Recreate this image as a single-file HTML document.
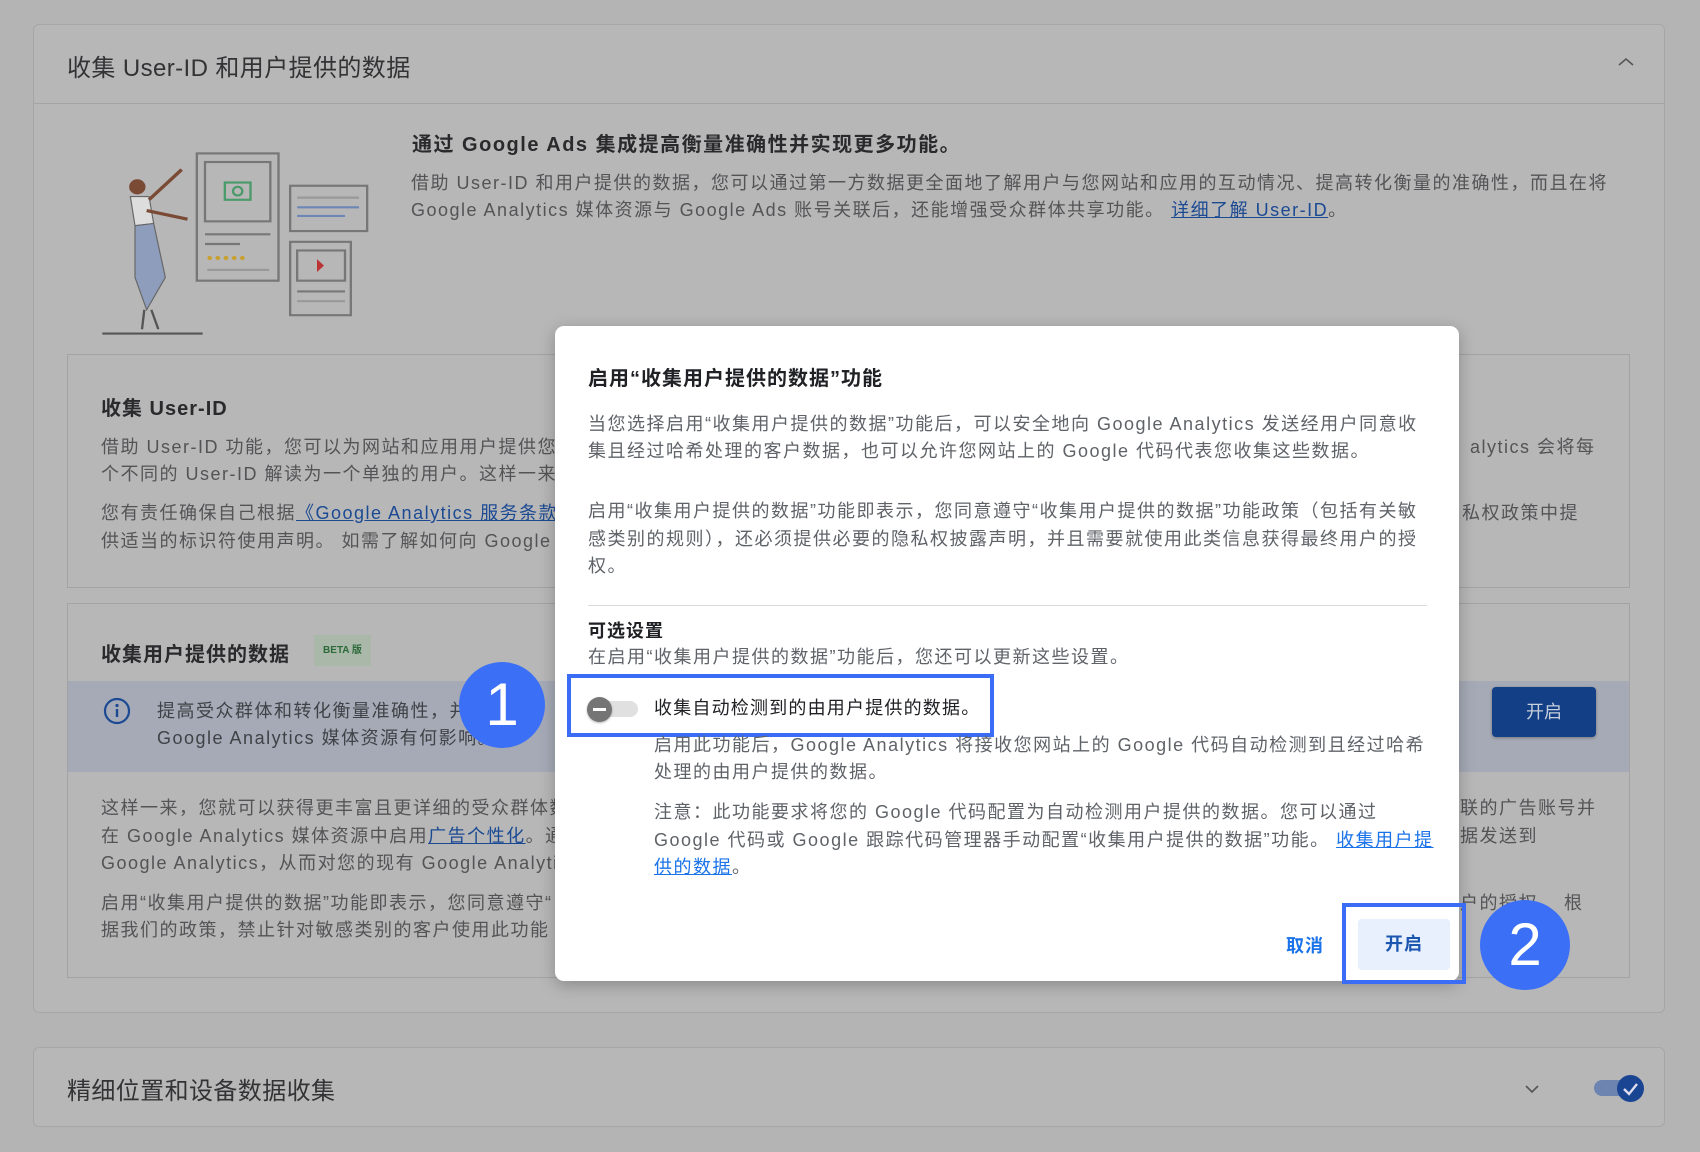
<!DOCTYPE html>
<html><head><meta charset="utf-8">
<style>
*{margin:0;padding:0;box-sizing:border-box}
body{width:1700px;height:1152px;background:#b4b4b5;font-family:"Liberation Sans","Noto Sans CJK SC",sans-serif;position:relative;overflow:hidden;color:#4a4a4c}
.a{position:absolute;white-space:nowrap}
.card{position:absolute;background:#b7b7b8;border:1px solid #a6a6a8;border-radius:6px}
.box{position:absolute;border:1px solid #a3a3a5}
.t{font-size:18px;color:#545456;line-height:27px;letter-spacing:1.5px}
.lk{color:#1b4a93;text-decoration:underline}
.dlg{position:absolute;left:555px;top:326px;width:904px;height:655px;background:#fff;border-radius:9px;box-shadow:0 4px 16px rgba(0,0,0,.25)}
.d{font-size:18px;color:#5f6368;line-height:27px;letter-spacing:1.5px}
.dl{color:#1a73e8;text-decoration:underline}
.circ{position:absolute;border-radius:50%;background:#3b6ff5;color:#fff;font-size:60px;text-align:center;font-family:"Liberation Sans",sans-serif}
</style></head><body>

<div class="card" style="left:33px;top:24px;width:1632px;height:989px"></div>
<div class="a" style="left:67px;top:48px;font-size:24px;color:#333335;letter-spacing:0.4px">收集 User-ID 和用户提供的数据</div>
<div class="a" style="left:33px;top:103px;width:1632px;height:1px;background:#a4a4a6"></div>
<svg class="a" style="left:1616px;top:55px" width="20" height="14"><path d="M3 10 L10 4 L17 10" stroke="#555" stroke-width="1.6" fill="none"/></svg>

<svg class="a" style="left:100px;top:148px" width="280" height="192" viewBox="0 0 240 178" preserveAspectRatio="none">
<rect x="83" y="5" width="70" height="118" fill="none" stroke="#777" stroke-width="2"/>
<rect x="90" y="13" width="56" height="55" fill="none" stroke="#777" stroke-width="2"/>
<rect x="107" y="32" width="22" height="16" fill="none" stroke="#4a9a6a" stroke-width="2"/>
<circle cx="118" cy="40" r="4" fill="none" stroke="#4a9a6a" stroke-width="2"/>
<line x1="90" y1="80" x2="146" y2="80" stroke="#777" stroke-width="2"/>
<line x1="90" y1="89" x2="120" y2="89" stroke="#777" stroke-width="2"/>
<g fill="#c9a030"><circle cx="94" cy="102" r="2"/><circle cx="101" cy="102" r="2"/><circle cx="108" cy="102" r="2"/><circle cx="115" cy="102" r="2"/><circle cx="122" cy="102" r="2"/></g>
<line x1="92" y1="113" x2="145" y2="113" stroke="#999" stroke-width="2"/>
<rect x="163" y="35" width="66" height="42" fill="none" stroke="#777" stroke-width="2"/>
<line x1="169" y1="46" x2="222" y2="46" stroke="#999" stroke-width="2"/>
<line x1="169" y1="55" x2="222" y2="55" stroke="#6c86b5" stroke-width="2"/>
<line x1="169" y1="63" x2="210" y2="63" stroke="#6c86b5" stroke-width="2"/>
<rect x="163" y="87" width="52" height="68" fill="none" stroke="#777" stroke-width="2"/>
<rect x="169" y="95" width="41" height="28" fill="none" stroke="#777" stroke-width="2"/>
<path d="M186 103 L192 109 L186 115Z" fill="#b33"/>
<line x1="169" y1="133" x2="210" y2="133" stroke="#777" stroke-width="2"/>
<line x1="169" y1="142" x2="210" y2="142" stroke="#999" stroke-width="2"/>
<circle cx="32" cy="36" r="7" fill="#7a4a35"/>
<path d="M26 45 L42 45 L46 70 L30 72Z" fill="#ddd" stroke="#666"/>
<path d="M42 48 L70 20 M40 58 L75 66" stroke="#7a4a35" stroke-width="3"/>
<path d="M30 72 L46 70 L56 120 L40 150 L30 120Z" fill="#8d9dbb" stroke="#666"/>
<path d="M38 150 L36 168 M44 150 L50 168" stroke="#555" stroke-width="2"/>
<line x1="2" y1="172" x2="88" y2="172" stroke="#555" stroke-width="2"/>
</svg>

<div class="a" style="left:412px;top:128px;font-size:20px;font-weight:bold;color:#2a2a2c;letter-spacing:1.5px">通过 Google Ads 集成提高衡量准确性并实现更多功能。</div>
<div class="a t" style="left:411px;top:170px">借助 User-ID 和用户提供的数据，您可以通过第一方数据更全面地了解用户与您网站和应用的互动情况、提高转化衡量的准确性，而且在将</div>
<div class="a t" style="left:411px;top:197px">Google Analytics 媒体资源与 Google Ads 账号关联后，还能增强受众群体共享功能。 <span class="lk">详细了解 User-ID</span>。</div>

<div class="box" style="left:67px;top:354px;width:1563px;height:234px"></div>
<div class="a" style="left:101px;top:392px;font-size:20px;font-weight:bold;color:#2a2a2c;letter-spacing:1px">收集 User-ID</div>
<div class="a t" style="left:101px;top:434px">借助 User-ID 功能，您可以为网站和应用用户提供您自</div>
<div class="a t" style="left:101px;top:461px">个不同的 User-ID 解读为一个单独的用户。这样一来，</div>
<div class="a t" style="left:101px;top:500px">您有责任确保自己根据<span class="lk">《Google Analytics 服务条款》</span></div>
<div class="a t" style="left:101px;top:528px">供适当的标识符使用声明。 如需了解如何向 Google A</div>
<div class="a t" style="left:1470px;top:434px">alytics 会将每</div>
<div class="a t" style="left:1462px;top:500px">私权政策中提</div>

<div class="box" style="left:67px;top:603px;width:1563px;height:375px"></div>
<div class="a" style="left:101px;top:638px;font-size:20px;font-weight:bold;color:#2a2a2c;letter-spacing:1px">收集用户提供的数据</div>
<div class="a" style="left:314px;top:635px;width:57px;height:31px;background:#a9b8a9;color:#2d6a3a;font-size:10px;font-weight:bold;line-height:31px;text-align:center">BETA 版</div>
<div class="a" style="left:68px;top:681px;width:1561px;height:91px;background:#a5aab6"></div>
<svg class="a" style="left:103px;top:697px" width="28" height="28"><circle cx="14" cy="14" r="12" fill="none" stroke="#1b4a93" stroke-width="2.2"/><circle cx="14" cy="8.5" r="1.6" fill="#1b4a93"/><line x1="14" y1="12" x2="14" y2="20" stroke="#1b4a93" stroke-width="2.4"/></svg>
<div class="a t" style="left:157px;top:698px;color:#3f4246">提高受众群体和转化衡量准确性，并</div>
<div class="a t" style="left:157px;top:725px;color:#3f4246">Google Analytics 媒体资源有何影响。</div>
<div class="a" style="left:1492px;top:687px;width:104px;height:50px;background:#133f86;border-radius:4px;color:#c8cfdc;font-size:18px;line-height:50px;text-align:center;box-shadow:0 1px 3px rgba(0,0,0,.3)">开启</div>
<div class="a t" style="left:101px;top:795px">这样一来，您就可以获得更丰富且更详细的受众群体数</div>
<div class="a t" style="left:101px;top:823px">在 Google Analytics 媒体资源中启用<span class="lk">广告个性化</span>。通</div>
<div class="a t" style="left:101px;top:850px">Google Analytics，从而对您的现有 Google Analytics</div>
<div class="a t" style="left:101px;top:890px">启用“收集用户提供的数据”功能即表示，您同意遵守“</div>
<div class="a t" style="left:101px;top:917px">据我们的政策，禁止针对敏感类别的客户使用此功能</div>
<div class="a t" style="left:1460px;top:795px">联的广告账号并</div>
<div class="a t" style="left:1460px;top:823px">据发送到</div>
<div class="a t" style="left:1460px;top:890px">户的授权。 根</div>

<div class="card" style="left:33px;top:1047px;width:1632px;height:80px"></div>
<div class="a" style="left:67px;top:1071px;font-size:24px;color:#333335;letter-spacing:0.4px">精细位置和设备数据收集</div>
<svg class="a" style="left:1523px;top:1083px" width="18" height="12"><path d="M3 3 L9 9 L15 3" stroke="#555" stroke-width="1.6" fill="none"/></svg>
<div class="a" style="left:1594px;top:1080px;width:40px;height:16px;border-radius:8px;background:#6d84b0"></div>
<div class="a" style="left:1617px;top:1075px;width:27px;height:27px;border-radius:50%;background:#1a4592"></div>
<svg class="a" style="left:1617px;top:1075px" width="27" height="27"><path d="M7 14 L12 19 L20 9" stroke="#dde" stroke-width="2.4" fill="none"/></svg>

<div class="dlg"></div>
<div class="a" style="left:588px;top:362px;font-size:20px;font-weight:bold;color:#202124;letter-spacing:1px">启用“收集用户提供的数据”功能</div>
<div class="a d" style="left:588px;top:411px">当您选择启用“收集用户提供的数据”功能后，可以安全地向 Google Analytics 发送经用户同意收</div>
<div class="a d" style="left:588px;top:438px">集且经过哈希处理的客户数据，也可以允许您网站上的 Google 代码代表您收集这些数据。</div>
<div class="a d" style="left:588px;top:498px">启用“收集用户提供的数据”功能即表示，您同意遵守“收集用户提供的数据”功能政策（包括有关敏</div>
<div class="a d" style="left:588px;top:526px">感类别的规则），还必须提供必要的隐私权披露声明，并且需要就使用此类信息获得最终用户的授</div>
<div class="a d" style="left:588px;top:553px">权。</div>
<div class="a" style="left:588px;top:605px;width:839px;height:1px;background:#dadce0"></div>
<div class="a" style="left:588px;top:617px;font-size:18px;font-weight:bold;color:#202124;letter-spacing:1px">可选设置</div>
<div class="a d" style="left:588px;top:644px">在启用“收集用户提供的数据”功能后，您还可以更新这些设置。</div>
<div class="a" style="left:600px;top:701px;width:38px;height:16px;border-radius:8px;background:#e0e0e0"></div>
<div class="a" style="left:587px;top:697px;width:25px;height:25px;border-radius:50%;background:#757575;box-shadow:0 1px 2px rgba(0,0,0,.3)"></div>
<div class="a" style="left:593px;top:708px;width:13px;height:3px;background:#fff"></div>
<div class="a" style="left:654px;top:694px;font-size:18px;color:#202124;letter-spacing:1.2px">收集自动检测到的由用户提供的数据。</div>
<div class="a" style="left:567px;top:674px;width:427px;height:63px;border:4px solid #3a6cf5"></div>
<div class="a d" style="left:654px;top:732px">启用此功能后，Google Analytics 将接收您网站上的 Google 代码自动检测到且经过哈希</div>
<div class="a d" style="left:654px;top:759px">处理的由用户提供的数据。</div>
<div class="a d" style="left:654px;top:799px">注意：此功能要求将您的 Google 代码配置为自动检测用户提供的数据。您可以通过</div>
<div class="a d" style="left:654px;top:827px">Google 代码或 Google 跟踪代码管理器手动配置“收集用户提供的数据”功能。 <span class="dl">收集用户提</span></div>
<div class="a d" style="left:654px;top:854px"><span class="dl">供的数据</span>。</div>
<div class="a" style="left:1286px;top:932px;font-size:18px;font-weight:bold;color:#1a73e8;letter-spacing:1px">取消</div>
<div class="a" style="left:1358px;top:919px;width:92px;height:51px;background:#e8f0fe;border-radius:4px;color:#1a55b0;font-size:18px;font-weight:bold;line-height:51px;text-align:center;letter-spacing:1px">开启</div>
<div class="a" style="left:1342px;top:903px;width:124px;height:81px;border:4px solid #3a6cf5"></div>

<div class="circ" style="left:459px;top:662px;width:86px;height:86px;line-height:86px">1</div>
<div class="circ" style="left:1480px;top:900px;width:90px;height:90px;line-height:90px">2</div>
</body></html>
